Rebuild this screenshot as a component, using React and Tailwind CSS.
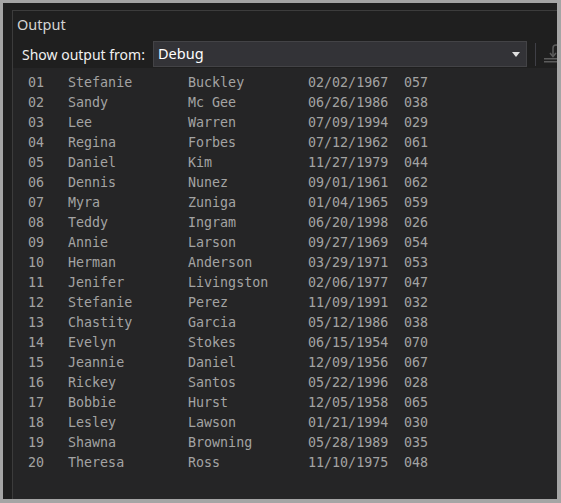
import React from 'react';

const rows = [
  ['01', 'Stefanie', 'Buckley', '02/02/1967', '057'],
  ['02', 'Sandy', 'Mc Gee', '06/26/1986', '038'],
  ['03', 'Lee', 'Warren', '07/09/1994', '029'],
  ['04', 'Regina', 'Forbes', '07/12/1962', '061'],
  ['05', 'Daniel', 'Kim', '11/27/1979', '044'],
  ['06', 'Dennis', 'Nunez', '09/01/1961', '062'],
  ['07', 'Myra', 'Zuniga', '01/04/1965', '059'],
  ['08', 'Teddy', 'Ingram', '06/20/1998', '026'],
  ['09', 'Annie', 'Larson', '09/27/1969', '054'],
  ['10', 'Herman', 'Anderson', '03/29/1971', '053'],
  ['11', 'Jenifer', 'Livingston', '02/06/1977', '047'],
  ['12', 'Stefanie', 'Perez', '11/09/1991', '032'],
  ['13', 'Chastity', 'Garcia', '05/12/1986', '038'],
  ['14', 'Evelyn', 'Stokes', '06/15/1954', '070'],
  ['15', 'Jeannie', 'Daniel', '12/09/1956', '067'],
  ['16', 'Rickey', 'Santos', '05/22/1996', '028'],
  ['17', 'Bobbie', 'Hurst', '12/05/1958', '065'],
  ['18', 'Lesley', 'Lawson', '01/21/1994', '030'],
  ['19', 'Shawna', 'Browning', '05/28/1989', '035'],
  ['20', 'Theresa', 'Ross', '11/10/1975', '048'],
];

export default function App() {
  return (
    <div className="w-[561px] h-[503px] bg-[#a5a5a5] pl-[3px] pt-[3px] pr-[4px] pb-[4px] overflow-hidden">
      <div className="w-full h-full bg-[#1f1f1f] pl-[9px] pt-[7px] flex flex-col">
        <div className="flex-1 flex flex-col border-l border-t border-[#3c3c3c] min-h-0 overflow-hidden">
          <div
            className="h-[28px] pl-[4px] pt-[4px] text-[14.5px] text-[#d4d4d4] leading-[18px]"
            style={{ fontFamily: '"Noto Sans", "Open Sans", sans-serif' }}
          >
            Output
          </div>
          <div className="h-[29px] flex items-center pl-[9px] pt-[1px] whitespace-nowrap" style={{ fontFamily: '"Noto Sans", "Open Sans", sans-serif' }}>
            <span className="w-[131px] shrink-0 text-[14px] text-[#f1f1f1]">Show output from:</span>
            <div className="w-[374px] shrink-0 h-[26px] bg-[#333337] border border-[#434346] flex items-center pl-[4px] pr-[6px]">
              <span className="flex-1 text-[14.5px] text-white">Debug</span>
              <svg width="8" height="5" viewBox="0 0 8 5">
                <path d="M0 0 L8 0 L4 5 Z" fill="#e0e0e0" />
              </svg>
            </div>
            <div className="w-px h-[23px] shrink-0 bg-[#3f3f46] ml-[8px]" />
            <svg width="18" height="20" viewBox="0 0 18 20" className="ml-[8px] shrink-0">
              <path d="M9 12 V4 a3 3 0 0 1 6 0" stroke="#5c5c5c" strokeWidth="1.5" fill="none" />
              <path d="M6 9 L9 12.5 L12 9" stroke="#5c5c5c" strokeWidth="1.5" fill="none" />
              <rect x="0" y="14" width="18" height="1.5" fill="#5c5c5c" />
              <rect x="0" y="17" width="18" height="1.5" fill="#5c5c5c" />
            </svg>
          </div>
          <div
            className="flex-1 bg-[#252526] pt-[5px] pl-[15px] text-[13.33px] leading-[20px] text-[#a3a3a3]"
            style={{ fontFamily: '"DejaVu Sans Mono", "Liberation Mono", monospace' }}
          >
            {rows.map((r) => (
              <div key={r[0]} className="flex h-[20px] whitespace-pre">
                <span className="w-[40px]">{r[0]}</span>
                <span className="w-[120px]">{r[1]}</span>
                <span className="w-[120px]">{r[2]}</span>
                <span className="w-[96px]">{r[3]}</span>
                <span>{r[4]}</span>
              </div>
            ))}
          </div>
        </div>
      </div>
    </div>
  );
}
